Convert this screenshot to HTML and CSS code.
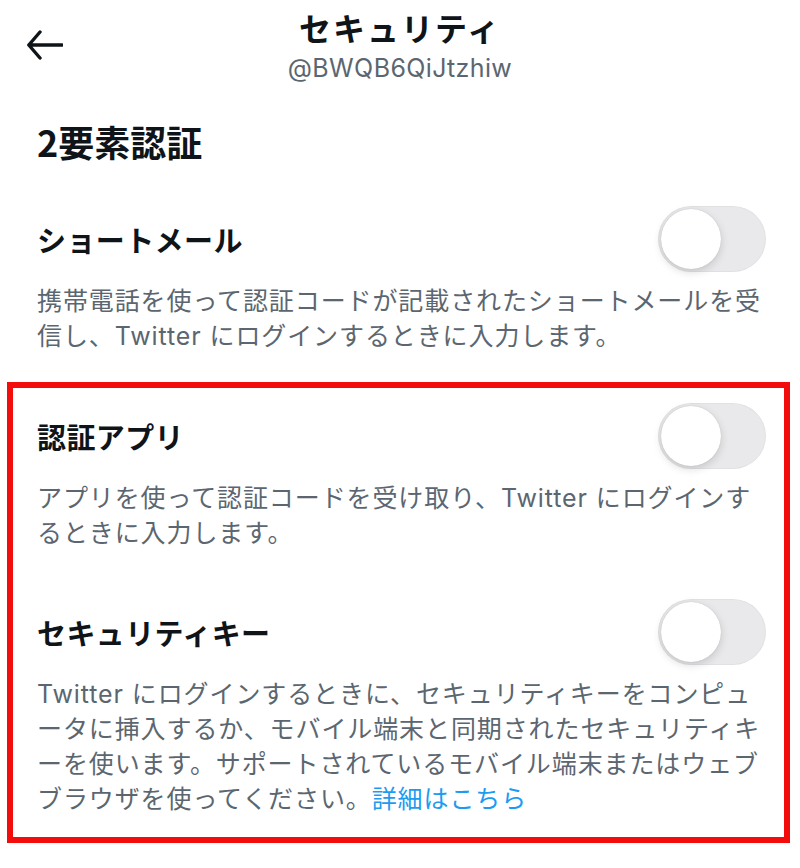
FILE: index.html
```html
<!DOCTYPE html>
<html lang="ja">
<head>
    <meta charset="UTF-8">
    <meta name="viewport" content="width=device-width, initial-scale=1.0">
    <title>セキュリティ</title>
    <link rel="stylesheet" href="styles.css">
</head>
<body>

    <header class="topbar">
        <button class="back" aria-label="戻る">
            <svg viewBox="0 0 36 36" width="36" height="36">
                <path d="M13 5 L1.8 18 L13 31 M1.8 18 H35" />
            </svg>
        </button>
        <div class="heading">
            <h1>セキュリティ</h1>
            <p class="handle">@BWQB6QiJtzhiw</p>
        </div>
    </header>

    <main class="content">
        <h2 class="page-title">2要素認証</h2>

        <div class="group">
            <section class="setting">
                <div class="setting-row">
                    <h3>ショートメール</h3>
                    <span class="toggle"><span class="knob"></span></span>
                </div>
                <p class="desc">携帯電話を使って認証コードが記載されたショートメールを受<br>信し、Twitter にログインするときに入力します。</p>
            </section>
        </div>

        <!-- highlighted part -->
        <div class="group marked">
            <section class="setting">
                <div class="setting-row">
                    <h3>認証アプリ</h3>
                    <span class="toggle"><span class="knob"></span></span>
                </div>
                <p class="desc">アプリを使って認証コードを受け取り、Twitter にログインす<br>るときに入力します。</p>
            </section>

            <section class="setting">
                <div class="setting-row">
                    <h3>セキュリティキー</h3>
                    <span class="toggle"><span class="knob"></span></span>
                </div>
                <p class="desc">Twitter にログインするときに、セキュリティキーをコンピュ<br>ータに挿入するか、モバイル端末と同期されたセキュリティキ<br>ーを使います。サポートされているモバイル端末またはウェブ<br>ブラウザを使ってください。<a href="#" class="more">詳細はこちら</a></p>
            </section>
        </div>
    </main>

</body>
</html>
```

FILE: styles.css
```css
body {
    font-family: Inter, 'Noto Sans CJK JP', sans-serif;
    margin: 0;
    padding: 0;
    background-color: #fff;
    color: #0f1419;
}

.topbar {
    display: grid;
    grid-template-columns: 1fr auto 1fr;
    padding-top: 8px;
}

.back {
    justify-self: start;
    align-self: start;
    margin: 19px 0 0 27px;
    padding: 0;
    border: none;
    background: none;
    width: 36px;
    height: 36px;
}

.back svg {
    display: block;
}

.back path {
    fill: none;
    stroke: #0f1419;
    stroke-width: 3.4;
    stroke-linecap: round;
    stroke-linejoin: round;
}

.heading {
    text-align: center;
}

.heading h1 {
    margin: 0;
    font-family: 'Noto Sans CJK JP', sans-serif;
    font-size: 32px;
    line-height: 38px;
    font-weight: 700;
    letter-spacing: 2px;
}

.handle {
    margin: 8px 0 0;
    font-size: 25px;
    line-height: 28px;
    color: #5b6670;
    letter-spacing: 0.4px;
}

.content {
    padding: 0 10px 0 7px;
}

.page-title {
    margin: 37px 0 22px 30px;
    font-family: 'Noto Sans CJK JP', sans-serif;
    font-size: 36px;
    line-height: 44px;
    font-weight: 700;
}

.group {
    border: 6px solid transparent;
    padding: 14px 18px 20px 24px;
}

.group.marked {
    margin-top: 2px;
    border-color: #f20c0c;
}

.setting + .setting {
    margin-top: 47px;
}

.setting-row {
    display: flex;
    align-items: center;
    justify-content: space-between;
    height: 67px;
}

.setting-row h3 {
    margin: 0;
    font-family: 'Noto Sans CJK JP', sans-serif;
    font-size: 29px;
    line-height: 36px;
    font-weight: 700;
    letter-spacing: 0.4px;
}

.toggle {
    position: relative;
    width: 108px;
    height: 66px;
    border-radius: 33px;
    background-color: #e9e9eb;
    box-shadow: inset 0 0 0 1px rgba(0, 0, 0, 0.03);
}

.knob {
    position: absolute;
    top: 3px;
    left: 3px;
    width: 60px;
    height: 60px;
    border-radius: 50%;
    background-color: #fff;
    box-shadow: 0 3px 8px rgba(0, 0, 0, 0.15), 0 0 1px rgba(0, 0, 0, 0.2);
}

.desc {
    margin: 12px 0 0;
    font-size: 25px;
    line-height: 35px;
    letter-spacing: 0.9px;
    color: #5b6670;
    white-space: nowrap;
}

.more {
    color: #1d9bf0;
    text-decoration: none;
}
```
